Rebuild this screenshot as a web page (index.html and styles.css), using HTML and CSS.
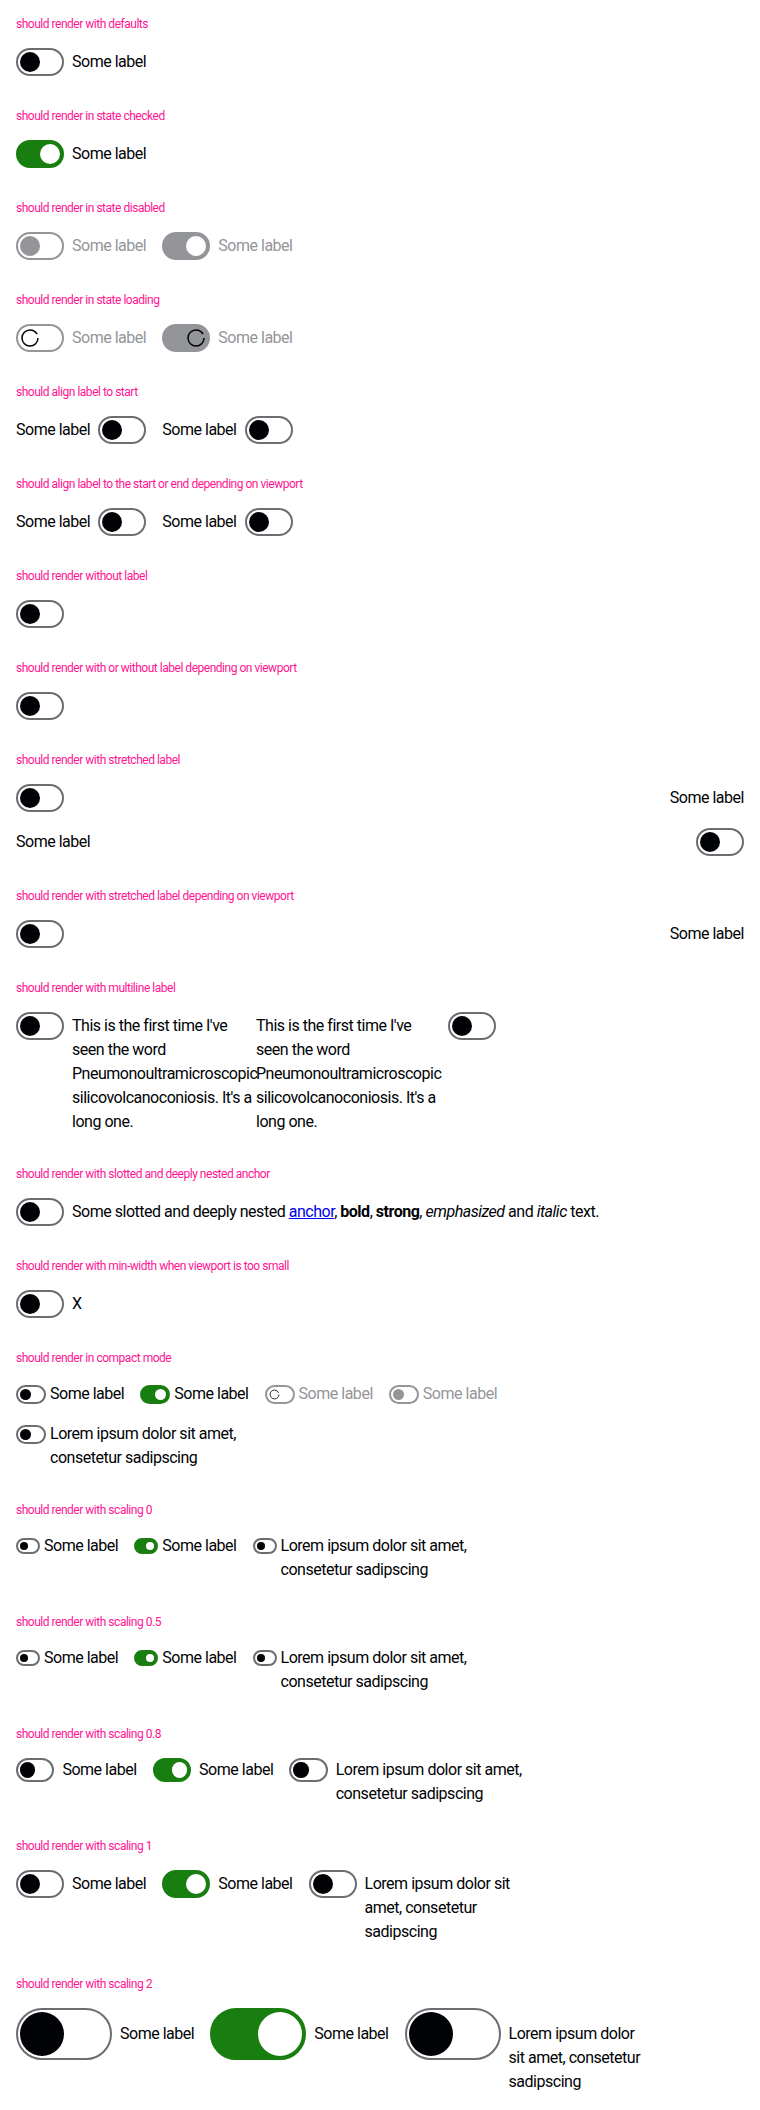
FILE: index.html
```html
<!DOCTYPE html>
<html lang="en">
<head>
<meta charset="utf-8">
<title>Switch</title>
<link rel="stylesheet" href="styles.css">
</head>
<body>

<section class="playground">
  <p class="title">should render with defaults</p>
  <div class="row">
    <label class="switch"><span class="track"><span class="thumb"></span></span><span class="label">Some label</span></label>
  </div>
</section>

<section class="playground">
  <p class="title">should render in state checked</p>
  <div class="row">
    <label class="switch is-checked"><span class="track"><span class="thumb"></span></span><span class="label">Some label</span></label>
  </div>
</section>

<section class="playground">
  <p class="title">should render in state disabled</p>
  <div class="row">
    <label class="switch is-disabled"><span class="track"><span class="thumb"></span></span><span class="label">Some label</span></label>
    <label class="switch is-disabled is-checked"><span class="track"><span class="thumb"></span></span><span class="label">Some label</span></label>
  </div>
</section>

<section class="playground">
  <p class="title">should render in state loading</p>
  <div class="row">
    <label class="switch is-loading"><span class="track"><span class="thumb"><svg class="spinner" viewBox="0 0 20 20"><circle cx="10" cy="10" r="8"/></svg></span></span><span class="label">Some label</span></label>
    <label class="switch is-loading is-checked"><span class="track"><span class="thumb"><svg class="spinner" viewBox="0 0 20 20"><circle cx="10" cy="10" r="8"/></svg></span></span><span class="label">Some label</span></label>
  </div>
</section>

<section class="playground">
  <p class="title">should align label to start</p>
  <div class="row">
    <label class="switch"><span class="label">Some label</span><span class="track"><span class="thumb"></span></span></label>
    <label class="switch"><span class="label">Some label</span><span class="track"><span class="thumb"></span></span></label>
  </div>
</section>

<section class="playground">
  <p class="title">should align label to the start or end depending on viewport</p>
  <div class="row">
    <label class="switch"><span class="label">Some label</span><span class="track"><span class="thumb"></span></span></label>
    <label class="switch"><span class="label">Some label</span><span class="track"><span class="thumb"></span></span></label>
  </div>
</section>

<section class="playground">
  <p class="title">should render without label</p>
  <div class="row">
    <label class="switch" aria-label="Some label"><span class="track"><span class="thumb"></span></span></label>
  </div>
</section>

<section class="playground">
  <p class="title">should render with or without label depending on viewport</p>
  <div class="row">
    <label class="switch" aria-label="Some label"><span class="track"><span class="thumb"></span></span></label>
  </div>
</section>

<section class="playground">
  <p class="title">should render with stretched label</p>
  <div class="stack">
    <label class="switch switch--stretch"><span class="track"><span class="thumb"></span></span><span class="label">Some label</span></label>
    <label class="switch switch--stretch"><span class="label">Some label</span><span class="track"><span class="thumb"></span></span></label>
  </div>
</section>

<section class="playground">
  <p class="title">should render with stretched label depending on viewport</p>
  <div class="stack">
    <label class="switch switch--stretch"><span class="track"><span class="thumb"></span></span><span class="label">Some label</span></label>
  </div>
</section>

<section class="playground">
  <p class="title">should render with multiline label</p>
  <div class="row row--flush">
    <label class="switch switch--fixed"><span class="track"><span class="thumb"></span></span><span class="label">This is the first time I've seen the word Pneumonoultramicroscopic silicovolcanoconiosis. It's a long one.</span></label>
    <label class="switch switch--fixed"><span class="label">This is the first time I've seen the word Pneumonoultramicroscopic silicovolcanoconiosis. It's a long one.</span><span class="track"><span class="thumb"></span></span></label>
  </div>
</section>

<section class="playground">
  <p class="title">should render with slotted and deeply nested anchor</p>
  <div class="row">
    <label class="switch"><span class="track"><span class="thumb"></span></span><span class="label">Some slotted and deeply nested <a href="#">anchor</a>, <b>bold</b>, <strong>strong</strong>, <em>emphasized</em> and <i>italic</i> text.</span></label>
  </div>
</section>

<section class="playground">
  <p class="title">should render with min-width when viewport is too small</p>
  <div class="row">
    <label class="switch"><span class="track"><span class="thumb"></span></span><span class="label">X</span></label>
  </div>
</section>

<section class="playground">
  <p class="title">should render in compact mode</p>
  <div class="stack">
    <div class="row">
      <label class="switch switch--compact"><span class="track"><span class="thumb"></span></span><span class="label">Some label</span></label>
      <label class="switch switch--compact is-checked"><span class="track"><span class="thumb"></span></span><span class="label">Some label</span></label>
      <label class="switch switch--compact is-loading"><span class="track"><span class="thumb"><svg class="spinner" viewBox="0 0 20 20"><circle cx="10" cy="10" r="8"/></svg></span></span><span class="label">Some label</span></label>
      <label class="switch switch--compact is-disabled"><span class="track"><span class="thumb"></span></span><span class="label">Some label</span></label>
    </div>
    <div class="row">
      <label class="switch switch--compact switch--fixed"><span class="track"><span class="thumb"></span></span><span class="label">Lorem ipsum dolor sit amet, consetetur sadipscing</span></label>
    </div>
  </div>
</section>

<section class="playground">
  <p class="title">should render with scaling 0</p>
  <div class="row">
    <label class="switch switch--s0"><span class="track"><span class="thumb"></span></span><span class="label">Some label</span></label>
    <label class="switch switch--s0 is-checked"><span class="track"><span class="thumb"></span></span><span class="label">Some label</span></label>
    <label class="switch switch--s0 switch--fixed"><span class="track"><span class="thumb"></span></span><span class="label">Lorem ipsum dolor sit amet, consetetur sadipscing</span></label>
  </div>
</section>

<section class="playground">
  <p class="title">should render with scaling 0.5</p>
  <div class="row">
    <label class="switch switch--s0"><span class="track"><span class="thumb"></span></span><span class="label">Some label</span></label>
    <label class="switch switch--s0 is-checked"><span class="track"><span class="thumb"></span></span><span class="label">Some label</span></label>
    <label class="switch switch--s0 switch--fixed"><span class="track"><span class="thumb"></span></span><span class="label">Lorem ipsum dolor sit amet, consetetur sadipscing</span></label>
  </div>
</section>

<section class="playground">
  <p class="title">should render with scaling 0.8</p>
  <div class="row">
    <label class="switch switch--s08"><span class="track"><span class="thumb"></span></span><span class="label">Some label</span></label>
    <label class="switch switch--s08 is-checked"><span class="track"><span class="thumb"></span></span><span class="label">Some label</span></label>
    <label class="switch switch--s08 switch--fixed"><span class="track"><span class="thumb"></span></span><span class="label">Lorem ipsum dolor sit amet, consetetur sadipscing</span></label>
  </div>
</section>

<section class="playground">
  <p class="title">should render with scaling 1</p>
  <div class="row">
    <label class="switch"><span class="track"><span class="thumb"></span></span><span class="label">Some label</span></label>
    <label class="switch is-checked"><span class="track"><span class="thumb"></span></span><span class="label">Some label</span></label>
    <label class="switch switch--fixed"><span class="track"><span class="thumb"></span></span><span class="label">Lorem ipsum dolor sit amet, consetetur sadipscing</span></label>
  </div>
</section>

<section class="playground">
  <p class="title">should render with scaling 2</p>
  <div class="row">
    <label class="switch switch--s2"><span class="track"><span class="thumb"></span></span><span class="label">Some label</span></label>
    <label class="switch switch--s2 is-checked"><span class="track"><span class="thumb"></span></span><span class="label">Some label</span></label>
    <label class="switch switch--s2 switch--fixed"><span class="track"><span class="thumb"></span></span><span class="label">Lorem ipsum dolor sit amet, consetetur sadipscing</span></label>
  </div>
</section>

</body>
</html>
```

FILE: styles.css
```css
* {
  box-sizing: border-box;
}

body {
  margin: 0;
  background: #ffffff;
  font-family: Roboto, "Liberation Sans", sans-serif;
  letter-spacing: -0.03em;
  color: #010205;
}

.playground {
  padding: 16px;
}

.title {
  margin: 0 0 16px;
  font-size: 12px;
  line-height: 16px;
  color: #ff1493;
}

.row {
  display: flex;
  align-items: flex-start;
  gap: 16px;
}

.row--flush {
  gap: 0;
}

.stack {
  display: flex;
  flex-direction: column;
  gap: 16px;
}

/* switch */
.switch {
  --thumb: 20px;
  --gap: 8px;
  --label-pad: 2px;
  --track-pad: 0px;
  display: flex;
  align-items: flex-start;
  gap: var(--gap);
  font-size: 16px;
  line-height: 24px;
  color: #010205;
  cursor: pointer;
}

.track {
  flex: none;
  display: flex;
  align-items: center;
  justify-content: flex-start;
  width: calc(var(--thumb) * 2 + 8px);
  height: calc(var(--thumb) + 8px);
  margin-top: var(--track-pad);
  padding: 2px;
  border: 2px solid #6b6d70;
  border-radius: 999px;
  background: #ffffff;
}

.thumb {
  display: flex;
  width: var(--thumb);
  height: var(--thumb);
  border-radius: 50%;
  background: #010205;
}

.label {
  padding-top: var(--label-pad);
  min-width: 0;
}

.label a {
  color: #0000ee;
  text-decoration: underline;
}

.label b,
.label strong {
  font-weight: 700;
}

/* states */
.is-checked .track {
  justify-content: flex-end;
  border-color: #197e10;
  background: #197e10;
}

.is-checked .thumb {
  background: #ffffff;
}

.is-disabled,
.is-loading {
  color: #949598;
  cursor: not-allowed;
}

.is-disabled .track,
.is-loading .track {
  border-color: #949598;
}

.is-disabled .thumb {
  background: #949598;
}

.is-disabled.is-checked .track,
.is-loading.is-checked .track {
  background: #949598;
}

.is-disabled.is-checked .thumb {
  background: #ffffff;
}

.is-loading .thumb {
  background: #ffffff;
}

.is-loading.is-checked .thumb {
  background: transparent;
}

.spinner {
  width: 100%;
  height: 100%;
}

.spinner circle {
  fill: none;
  stroke: #010205;
  stroke-width: 1.5;
  stroke-dasharray: 46 4;
}

/* layout modifiers */
.switch--stretch {
  justify-content: space-between;
  width: 100%;
}

.switch--fixed {
  width: 240px;
}

.switch--fixed .label {
  flex: 1;
}

/* sizes */
.switch--compact {
  --thumb: 11px;
  --gap: 4px;
  --label-pad: 0px;
  --track-pad: 2.5px;
}

.switch--s0 {
  --thumb: 8px;
  --gap: 4px;
  --label-pad: 0px;
  --track-pad: 4px;
}

.switch--s08 {
  --thumb: 15.2px;
  --gap: 8px;
  --label-pad: 0px;
  --track-pad: 0.4px;
}

.switch--s2 {
  --thumb: 44px;
  --gap: 8px;
  --label-pad: 14px;
}
```
